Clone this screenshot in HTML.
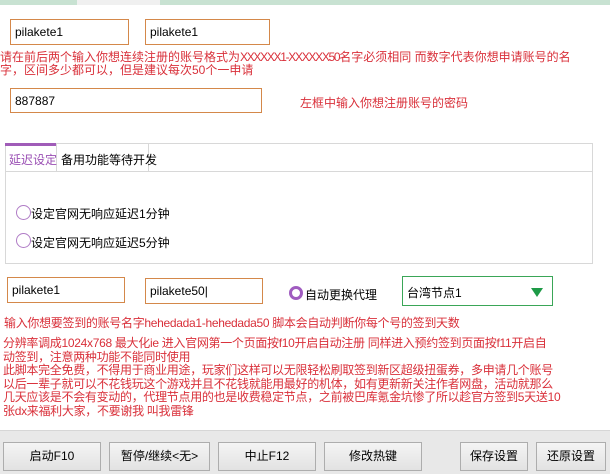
<!DOCTYPE html><html><head><meta charset="utf-8"><style>
body{margin:0;width:610px;height:473px;background:#fff;position:relative;overflow:hidden;font-family:"Liberation Sans","Noto Sans CJK SC",sans-serif;font-size:12px}
.a{position:absolute}
.in{position:absolute;border:1px solid #d4884a;box-sizing:border-box;padding:5px 0 0 4px;font-size:12px;color:#000}
.r{position:absolute;color:#d9303a;font-size:12px;line-height:13px;left:0;white-space:nowrap}
.btn{position:absolute;top:442px;height:29px;box-sizing:border-box;border:1px solid #adadad;background:linear-gradient(#f4f4f4,#e2e2e2);text-align:center;line-height:27px;font-size:12px}
.rad{position:absolute;width:12px;height:12px;border:1px solid #b07cc6;border-radius:50%;box-sizing:border-box}
.n{letter-spacing:-0.3px}
</style></head><body>
<div class="a" style="left:0;top:0;width:610px;height:5px;background:#c8e2d2"></div>
<div class="a" style="left:77px;top:0;width:83px;height:5px;background:#f0f0f0"></div>
<div class="in" style="left:10px;top:19px;width:119px;height:26px">pilakete1</div>
<div class="in" style="left:145px;top:19px;width:125px;height:26px">pilakete1</div>
<div class="r" style="top:51px">请在前后两个输入你想连续注册的账号格式为<span style="letter-spacing:-1.3px">XXXXXX1-XXXXXX50</span>名字必须相同 而数字代表你想申请账号的名<br>字，区间多少都可以，但是建议每次50个一申请</div>
<div class="in" style="left:10px;top:88px;width:252px;height:25px">887887</div>
<div class="r" style="left:300px;top:97px">左框中输入你想注册账号的密码</div>
<div class="a" style="left:5px;top:143px;width:588px;height:121px;border:1px solid #d8d8d8;box-sizing:border-box"></div>
<div class="a" style="left:5px;top:171px;width:588px;height:1px;background:#d8d8d8"></div>
<div class="a" style="left:5px;top:143px;width:51px;height:3px;background:#a05cb8"></div>
<div class="a" style="left:56px;top:143px;width:1px;height:29px;background:#d8d8d8"></div>
<div class="a" style="left:148px;top:143px;width:1px;height:29px;background:#d8d8d8"></div>
<div class="a" style="left:9px;top:151px;color:#9a4fb4">延迟设定</div>
<div class="a" style="left:61px;top:151px">备用功能等待开发</div>
<div class="rad" style="left:16px;top:205px;width:15px;height:15px"></div>
<div class="a" style="left:31px;top:205px">设定官网无响应延迟1分钟</div>
<div class="rad" style="left:16px;top:233px;width:15px;height:15px"></div>
<div class="a" style="left:31px;top:234px">设定官网无响应延迟5分钟</div>
<div class="in" style="left:7px;top:277px;width:118px;height:26px">pilakete1</div>
<div class="in" style="left:145px;top:278px;width:118px;height:26px">pilakete50|</div>
<div class="a" style="left:289px;top:286px;width:14px;height:14px;border:3px solid #a05cc0;border-radius:50%;box-sizing:border-box"></div>
<div class="a" style="left:305px;top:286px">自动更换代理</div>
<div class="a" style="left:402px;top:276px;width:151px;height:30px;border:1px solid #3aa657;box-sizing:border-box;padding:7px 0 0 4px">台湾节点1</div>
<div class="a" style="left:531px;top:288px;width:0;height:0;border-left:6px solid transparent;border-right:6px solid transparent;border-top:9px solid #1e9a47"></div>
<div class="r n" style="left:4px;top:317px">输入你想要签到的账号名字hehedada1-hehedada50 脚本会自动判断你每个号的签到天数</div>
<div class="r n" style="left:3px;top:337px;line-height:13.6px">分辨率调成1024x768 最大化ie 进入官网第一个页面按f10开启自动注册 同样进入预约签到页面按f11开启自<br>动签到，注意两种功能不能同时使用<br>此脚本完全免费，不得用于商业用途，玩家们这样可以无限轻松刷取签到新区超级扭蛋券，多申请几个账号<br>以后一辈子就可以不花钱玩这个游戏并且不花钱就能用最好的机体，如有更新新关注作者网盘，活动就那么<br>几天应该是不会有变动的，代理节点用的也是收费稳定节点，之前被巴库氪金坑惨了所以趁官方签到5天送10<br>张dx来福利大家，不要谢我 叫我雷锋</div>
<div class="a" style="left:0;top:430px;width:610px;height:43px;background:#e8e8e8;border-top:1px solid #d6d6d6"></div>
<div class="btn" style="left:3px;width:98px">启动F10</div>
<div class="btn" style="left:109px;width:101px">暂停/继续&lt;无&gt;</div>
<div class="btn" style="left:218px;width:98px">中止F12</div>
<div class="btn" style="left:324px;width:98px">修改热键</div>
<div class="btn" style="left:460px;width:68px">保存设置</div>
<div class="btn" style="left:536px;width:70px">还原设置</div>
</body></html>
